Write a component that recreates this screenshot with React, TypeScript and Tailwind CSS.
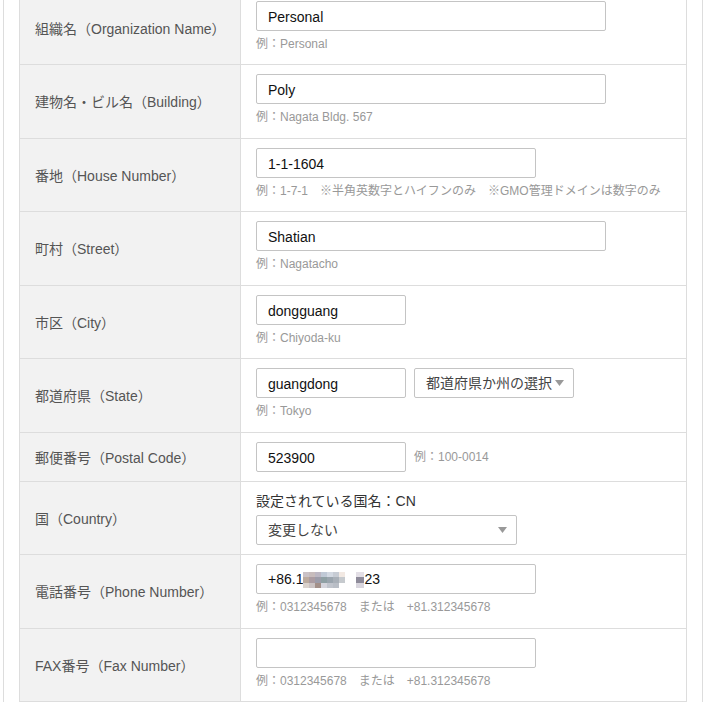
import React from "react";

const FONT = { fontFamily: '"Liberation Sans", Arial, "Noto Sans CJK JP", sans-serif' };

function Row({
  label,
  h,
  children,
  first,
}: {
  label: string;
  h: string;
  children: React.ReactNode;
  first?: boolean;
}) {
  return (
    <div
      className={`grid grid-cols-[221px_1fr] border-t border-[#ddd] ${h} ${first ? "mt-[-9px]" : ""}`}
    >
      <div className="bg-[#f2f2f2] border-r border-[#ddd] flex items-center pl-[15px] pt-[2px] text-[14px] text-[#555] whitespace-nowrap">
        {label}
      </div>
      <div className="pl-[15px] pt-[9px]">{children}</div>
    </div>
  );
}

function TextBox({ value, w }: { value?: string; w: string }) {
  return (
    <input
      readOnly
      value={value ?? ""}
      className={`${w} h-[30px] border border-[#c4c4c4] rounded-[2px] bg-white px-[11px] pt-[1px] text-[14px] text-[#111] outline-none`}
      style={FONT}
    />
  );
}

function Hint({ children }: { children: React.ReactNode }) {
  return <div className="mt-[4px] text-[12px] leading-[18px] text-[#999] whitespace-nowrap">{children}</div>;
}

function SelectBox({ text, w }: { text: string; w: string }) {
  return (
    <div
      className={`${w} h-[30px] border border-[#c4c4c4] rounded-[2px] bg-white flex items-center justify-between pl-[11px] pr-[9px] text-[14px] text-[#444] whitespace-nowrap`}
    >
      <span>{text}</span>
      <svg width="9" height="6" viewBox="0 0 9 6" className="shrink-0">
        <path d="M0 0 L9 0 L4.5 6 Z" fill="#999" />
      </svg>
    </div>
  );
}

// pixelated block hiding part of the phone number
const MOSAIC: [number, number, string][] = [
  [0, 0, "#cbc2c6"], [6, 0, "#c7bcbc"], [12, 0, "#bcb7c3"], [18, 0, "#c0c9d6"], [24, 0, "#d3d9e2"], [30, 0, "#c7ccd4"], [36, 0, "#f2e9e3"],
  [0, 5, "#bcab9f"], [6, 5, "#ab9ca2"], [12, 5, "#9c9ca9"], [18, 5, "#8fa0a4"], [24, 5, "#9ba5ae"], [30, 5, "#a9b0b8"], [36, 5, "#c6cace"],
  [0, 11, "#dad2cd"], [6, 11, "#cac2c2"], [12, 11, "#a39089"], [18, 11, "#d4d4dc"], [24, 11, "#c0c4cc"], [30, 11, "#b9bec6"],
  [53, 5, "#8e8b9a"], [53, 0, "#e3dfe6"], [53, 11, "#d9d6de"],
];

function PhoneBox() {
  return (
    <div className="w-[280px] h-[30px] border border-[#c4c4c4] rounded-[2px] bg-white pl-[11px] pt-[1px] flex items-center text-[14px] text-[#111]">
      <span>+86.1</span>
      <svg width="61" height="17" viewBox="0 0 61 17" className="mt-[1px]">
        {MOSAIC.map(([x, y, c], i) => (
          <rect key={i} x={x} y={y} width={x === 53 ? 8 : 6} height={y === 5 ? 6 : 5} fill={c} />
        ))}
      </svg>
      <span>23</span>
    </div>
  );
}

export default function App() {
  return (
    <div className="w-[708px] h-[711px] overflow-hidden bg-white" style={FONT}>
      <div className="ml-[3px] w-[700px] h-[711px] border-x border-[#ddd] pl-[15px]">
        <div className="w-[668px] border-x border-b border-[#ddd]">
          <Row label="組織名（Organization Name）" h="h-[73px]" first>
            <TextBox value="Personal" w="w-[350px]" />
            <Hint>例：Personal</Hint>
          </Row>
          <Row label="建物名・ビル名（Building）" h="h-[74px]">
            <TextBox value="Poly" w="w-[350px]" />
            <Hint>例：Nagata Bldg. 567</Hint>
          </Row>
          <Row label="番地（House Number）" h="h-[73px]">
            <TextBox value="1-1-1604" w="w-[280px]" />
            <Hint>例：1-7-1　※半角英数字とハイフンのみ　※GMO管理ドメインは数字のみ</Hint>
          </Row>
          <Row label="町村（Street）" h="h-[74px]">
            <TextBox value="Shatian" w="w-[350px]" />
            <Hint>例：Nagatacho</Hint>
          </Row>
          <Row label="市区（City）" h="h-[73px]">
            <TextBox value="dongguang" w="w-[150px]" />
            <Hint>例：Chiyoda-ku</Hint>
          </Row>
          <Row label="都道府県（State）" h="h-[74px]">
            <div className="flex gap-[8px]">
              <TextBox value="guangdong" w="w-[150px]" />
              <SelectBox text="都道府県か州の選択" w="w-[160px]" />
            </div>
            <Hint>例：Tokyo</Hint>
          </Row>
          <Row label="郵便番号（Postal Code）" h="h-[49px]">
            <div className="flex items-center gap-[8px]">
              <TextBox value="523900" w="w-[150px]" />
              <span className="text-[12px] text-[#999]">例：100-0014</span>
            </div>
          </Row>
          <Row label="国（Country）" h="h-[73px]">
            <div className="text-[14px] leading-[22px] text-[#333] -mt-[1px]">設定されている国名：CN</div>
            <div className="mt-[3px]">
              <SelectBox text="変更しない" w="w-[261px]" />
            </div>
          </Row>
          <Row label="電話番号（Phone Number）" h="h-[74px]">
            <PhoneBox />
            <Hint>例：0312345678　または　+81.312345678</Hint>
          </Row>
          <Row label="FAX番号（Fax Number）" h="h-[73px]">
            <TextBox w="w-[280px]" />
            <Hint>例：0312345678　または　+81.312345678</Hint>
          </Row>
        </div>
      </div>
    </div>
  );
}
